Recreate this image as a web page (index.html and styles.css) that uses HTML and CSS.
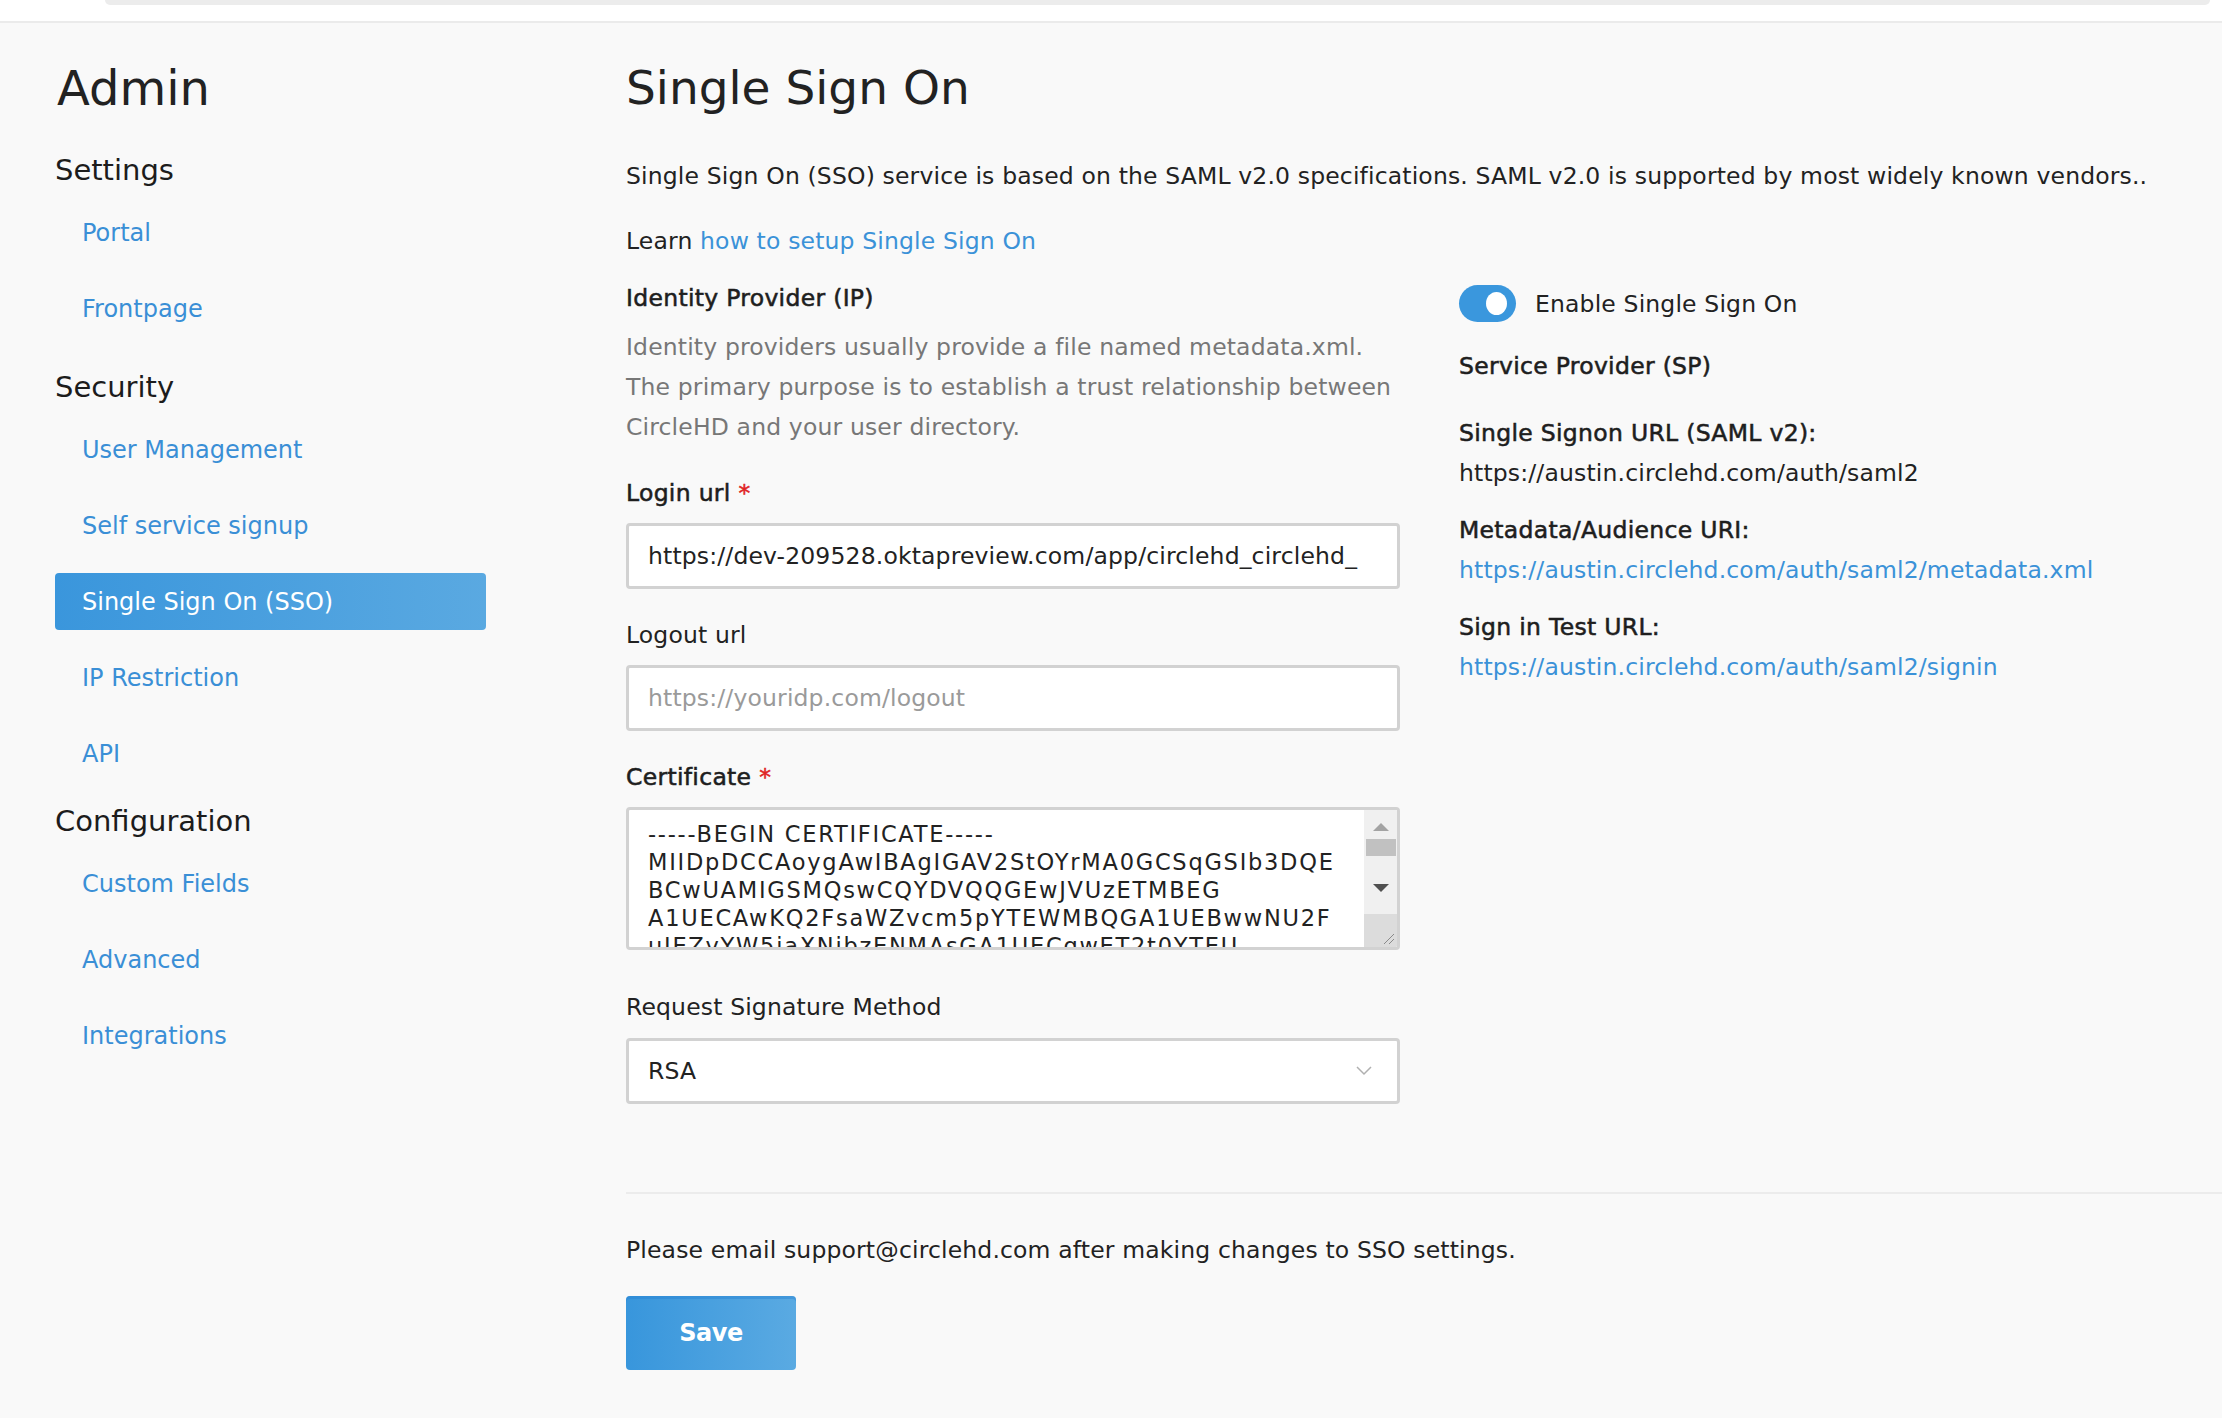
FILE: index.html
```html
<!DOCTYPE html>
<html lang="en">
<head>
<meta charset="utf-8">
<title>Admin - Single Sign On</title>
<link rel="stylesheet" href="styles.css">
</head>
<body>
<div class="topbar"><div class="tabstrip"></div></div>
<div class="page">
  <aside class="sidebar">
    <h1 class="side-title">Admin</h1>
    <h2 class="side-head">Settings</h2>
    <a class="nav-item">Portal</a>
    <a class="nav-item">Frontpage</a>
    <h2 class="side-head side-head-gap">Security</h2>
    <a class="nav-item">User Management</a>
    <a class="nav-item">Self service signup</a>
    <a class="nav-item active">Single Sign On (SSO)</a>
    <a class="nav-item">IP Restriction</a>
    <a class="nav-item">API</a>
    <h2 class="side-head">Configuration</h2>
    <a class="nav-item">Custom Fields</a>
    <a class="nav-item">Advanced</a>
    <a class="nav-item">Integrations</a>
  </aside>
  <main class="content">
    <h1 class="title">Single Sign On</h1>
    <p class="intro">Single Sign On (SSO) service is based on the SAML v2.0 specifications. SAML v2.0 is supported by most widely known vendors..</p>
    <p class="learn">Learn <a class="link">how to setup Single Sign On</a></p>
    <div class="columns">
      <div class="idp">
        <div class="label strong">Identity Provider (IP)</div>
        <p class="muted">Identity providers usually provide a file named metadata.xml.<br>The primary purpose is to establish a trust relationship between<br>CircleHD and your user directory.</p>
        <div class="label strong field-label">Login url <span class="req">*</span></div>
        <input class="field" type="text" value="https://dev-209528.oktapreview.com/app/circlehd_circlehd_" readonly>
        <div class="label field-label">Logout url</div>
        <input class="field" type="text" placeholder="https://youridp.com/logout">
        <div class="label strong field-label">Certificate <span class="req">*</span></div>
        <div class="cert">
          <div class="cert-text">-----BEGIN CERTIFICATE-----
MIIDpDCCAoygAwIBAgIGAV2StOYrMA0GCSqGSIb3DQE
BCwUAMIGSMQswCQYDVQQGEwJVUzETMBEG
A1UECAwKQ2FsaWZvcm5pYTEWMBQGA1UEBwwNU2F
uIEZyYW5jaXNjbzENMAsGA1UECgwET2t0YTEU
MBIGA1UECwwLU1NPUHJvdmlkZXIxFzAVBgNV</div>
          <div class="scroll">
            <div class="scroll-track">
              <span class="arrow-up"></span>
              <span class="thumb"></span>
              <span class="arrow-down"></span>
            </div>
            <div class="resizer">
              <svg width="14" height="14" viewBox="0 0 14 14"><path d="M13 3 L3 13 M13 8 L8 13" stroke="#8a8a8a" stroke-width="1" fill="none"/></svg>
            </div>
          </div>
        </div>
        <div class="label field-label sig-label">Request Signature Method</div>
        <div class="select">
          <span>RSA</span>
          <svg class="chev" width="16" height="10" viewBox="0 0 16 10"><path d="M1 1 L8 8 L15 1" stroke="#b0b0b0" stroke-width="1.5" fill="none"/></svg>
        </div>
      </div>
      <div class="sp">
        <div class="toggle-row">
          <span class="toggle"><span class="knob"></span></span>
          <span>Enable Single Sign On</span>
        </div>
        <div class="sp-title strong">Service Provider (SP)</div>
        <div class="sp-block sp-first">
          <div class="strong">Single Signon URL (SAML v2):</div>
          <div>https://austin.circlehd.com/auth/saml2</div>
        </div>
        <div class="sp-block">
          <div class="strong">Metadata/Audience URI:</div>
          <a class="link">https://austin.circlehd.com/auth/saml2/metadata.xml</a>
        </div>
        <div class="sp-block">
          <div class="strong">Sign in Test URL:</div>
          <a class="link">https://austin.circlehd.com/auth/saml2/signin</a>
        </div>
      </div>
    </div>
    <hr class="divider">
    <p class="notice">Please email support@circlehd.com after making changes to SSO settings.</p>
    <button class="save" type="button">Save</button>
  </main>
</div>
</body>
</html>
```
FILE: styles.css
```css
* { box-sizing: border-box; }
html, body { margin: 0; padding: 0; }
body {
  background: #f9f9f9;
  color: #222;
  font-family: "DejaVu Sans", "Open Sans", sans-serif;
  font-size: 23.5px;
  letter-spacing: 0.15px;
  width: 2222px;
  height: 1418px;
  overflow: hidden;
}
.topbar {
  height: 23px;
  background: #fff;
  border-bottom: 2px solid #ebebeb;
}
.tabstrip {
  margin: 0 12px 0 105px;
  height: 5px;
  background: #ececec;
  border-radius: 0 0 6px 6px;
}
.page {
  display: flex;
  padding: 36px 0 0 55px;
}
.sidebar {
  width: 431px;
  margin-right: 140px;
  display: flex;
  flex-direction: column;
  flex-shrink: 0;
}
.side-title {
  margin: 0 0 33px 2px;
  font-size: 48px;
  font-weight: 400;
  letter-spacing: 0;
  line-height: 58px;
  color: #222;
}
.side-head {
  margin: 0 0 14px 0;
  font-size: 29px;
  font-weight: 400;
  letter-spacing: 0;
  line-height: 40px;
  color: #1c1c1c;
}
.side-head-gap { margin-top: 11px; }
.nav-item {
  display: flex;
  align-items: center;
  height: 57px;
  margin-bottom: 19px;
  padding-left: 27px;
  font-size: 24px;
  letter-spacing: 0;
  color: #3a8fd6;
  border-radius: 4px;
  text-decoration: none;
}
.nav-item.active {
  color: #fff;
  background: linear-gradient(90deg, #3a96dc 0%, #5aa9e1 100%);
}
.content {
  flex: 1;
  min-width: 0;
}
.title {
  margin: 0 0 42px 0;
  font-size: 47px;
  font-weight: 400;
  letter-spacing: 0;
  line-height: 58px;
  color: #222;
}
.intro {
  margin: 0 0 31px 0;
  line-height: 34px;
}
.learn {
  margin: 0 0 23px 0;
  line-height: 34px;
}
.link { color: #3b92d8; text-decoration: none; }
.columns {
  display: flex;
  gap: 59px;
}
.idp {
  width: 774px;
  display: flex;
  flex-direction: column;
}
.label { line-height: 34px; }
.strong {
  color: #1e1e1e;
  -webkit-text-stroke: 0.55px #1e1e1e;
  letter-spacing: 0.3px;
}
.muted {
  margin: 12px 0 0 0;
  line-height: 40px;
  color: #777;
}
.field-label { margin-top: 29px; margin-bottom: 13px; }
.req { color: #e02424; -webkit-text-stroke: 0.5px #e02424; }
.field {
  display: block;
  width: 774px;
  height: 66px;
  padding: 0 19px;
  border: 3px solid #d2d2d2;
  border-radius: 4px;
  background: #fff;
  font-family: "DejaVu Sans", "Open Sans", sans-serif;
  font-size: 23.5px;
  letter-spacing: 0.15px;
  color: #222;
  outline: none;
}
.field::placeholder { color: #9a9a9a; }
.cert {
  display: flex;
  height: 143px;
  border: 3px solid #d2d2d2;
  border-radius: 4px;
  background: #fff;
  overflow: hidden;
}
.cert-text {
  flex: 1;
  padding: 10px 0 0 19px;
  white-space: pre;
  overflow: hidden;
  font-family: "DejaVu Sans", "Open Sans", sans-serif;
  font-size: 22.5px;
  line-height: 28px;
  letter-spacing: 1.75px;
  color: #222;
}
.scroll {
  width: 33px;
  display: flex;
  flex-direction: column;
  background: #f0f0f0;
}
.scroll-track {
  flex: 1;
  display: flex;
  flex-direction: column;
  align-items: center;
  padding-top: 13px;
}
.arrow-up {
  width: 0; height: 0;
  border-left: 8px solid transparent;
  border-right: 8px solid transparent;
  border-bottom: 8px solid #a3a3a3;
}
.thumb {
  width: 30px;
  height: 17px;
  margin-top: 8px;
  background: #c1c1c1;
}
.arrow-down {
  width: 0; height: 0;
  margin-top: 28px;
  border-left: 8px solid transparent;
  border-right: 8px solid transparent;
  border-top: 8px solid #505050;
}
.resizer {
  height: 33px;
  background: #dcdcdc;
  display: flex;
  align-items: flex-end;
  justify-content: flex-end;
  padding: 0 2px 2px 0;
}
.sig-label { margin-top: 40px; margin-bottom: 14px; }
.select {
  display: flex;
  align-items: center;
  justify-content: space-between;
  height: 66px;
  padding: 0 25px 0 19px;
  border: 3px solid #d2d2d2;
  border-radius: 4px;
  background: #fff;
}
.chev { display: block; }
.sp {
  flex: 1;
  display: flex;
  flex-direction: column;
  padding-top: 4px;
}
.toggle-row {
  display: flex;
  align-items: center;
  gap: 19px;
  height: 37px;
}
.toggle {
  width: 57px;
  height: 37px;
  border-radius: 19px;
  background: #3a97dd;
  display: flex;
  align-items: center;
  justify-content: flex-end;
  padding-right: 9px;
}
.knob {
  width: 21px;
  height: 23px;
  border-radius: 50%;
  background: #fff;
}
.sp-title { margin-top: 24px; line-height: 40px; }
.sp-block {
  display: flex;
  flex-direction: column;
  line-height: 40px;
  margin-top: 17px;
}
.sp-block.sp-first { margin-top: 27px; }
.divider {
  margin: 88px 0 0 0;
  border: 0;
  height: 2px;
  background: #ececec;
}
.notice {
  margin: 39px 0 29px 0;
  line-height: 34px;
}
.save {
  width: 170px;
  height: 74px;
  border: 0;
  border-radius: 4px;
  background: linear-gradient(90deg, #3896dc 0%, #5aaae2 100%);
  box-shadow: inset 0 3px 0 rgba(40, 130, 210, 0.45);
  color: #fff;
  font-family: "DejaVu Sans", "Open Sans", sans-serif;
  font-size: 24px;
  font-weight: 700;
  letter-spacing: -0.5px;
  cursor: pointer;
}
```
